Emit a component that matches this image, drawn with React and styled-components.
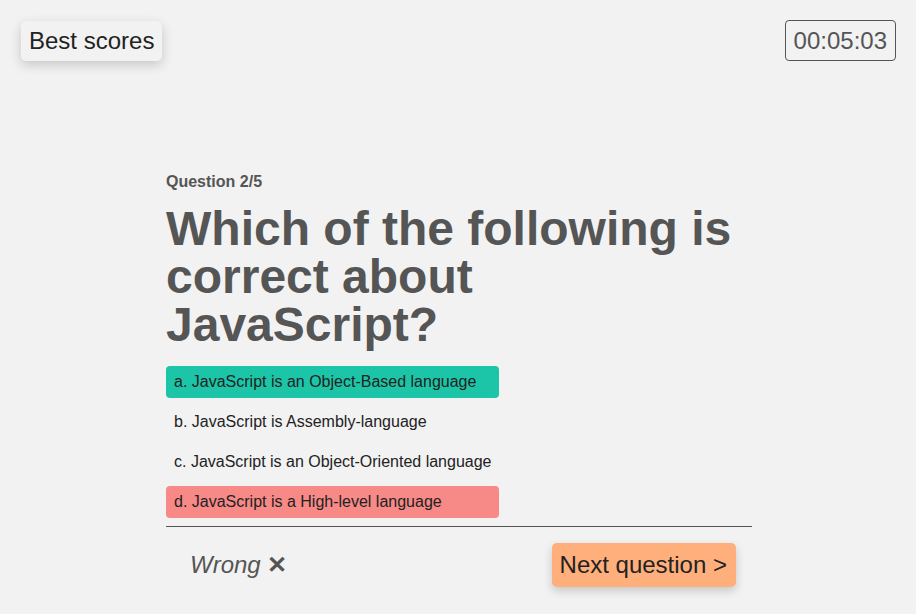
import React from "react";
import styled, { createGlobalStyle } from "styled-components";

const Global = createGlobalStyle`
  html, body { margin: 0; padding: 0; background: #f2f2f2; }
  body { font-family: "Liberation Sans", Arial, sans-serif; color: #555; }
`;

const Page = styled.div`
  min-height: 614px;
  display: flex;
  flex-direction: column;
  padding-left: 2px;
`;

const Header = styled.header`
  display: flex;
  justify-content: space-between;
  align-items: flex-start;
  padding: 20px 20px 0 19px;
`;

const ScoresButton = styled.button`
  margin-top: 1px;
  font-family: inherit;
  font-size: 24px;
  color: #222;
  background: #f2f2f2;
  border: none;
  border-radius: 5px;
  padding: 0 8px;
  height: 40px;
  box-shadow: 0 4px 12px rgba(0, 0, 0, 0.18);
`;

const Timer = styled.div`
  font-size: 24px;
  color: #555;
  border: 1px solid #555;
  border-radius: 4px;
  height: 39px;
  padding: 0 8px;
  display: flex;
  align-items: center;
`;

const Main = styled.main`
  width: 586px;
  margin: 112px auto 0;
  display: flex;
  flex-direction: column;
`;

const Counter = styled.div`
  font-size: 16px;
  font-weight: bold;
  color: #555;
`;

const Heading = styled.h1`
  margin: 14px 0 0;
  font-size: 48px;
  line-height: 48px;
  font-weight: bold;
  color: #555;
  width: 580px;
`;

const Options = styled.ul`
  list-style: none;
  margin: 17px 0 0;
  padding: 0;
  display: flex;
  flex-direction: column;
  gap: 8px;
`;

const tones = { correct: "#1dc5a8", wrong: "#f78987", none: "transparent" };

const Option = styled.li`
  width: 333px;
  height: 32px;
  box-sizing: border-box;
  padding: 0 8px;
  display: flex;
  align-items: center;
  white-space: nowrap;
  border-radius: 4px;
  font-size: 16px;
  color: #222;
  background: ${(p) => tones[p.$tone]};
`;

const Divider = styled.hr`
  margin: 8px 0 0;
  border: none;
  border-top: 1px solid #555;
  height: 0;
`;

const Footer = styled.div`
  display: flex;
  justify-content: space-between;
  align-items: flex-start;
  padding: 16px 16px 0 24px;
`;

const Verdict = styled.div`
  margin-top: 8px;
  font-size: 24px;
  font-style: italic;
  color: #555;
`;

const Cross = styled.span`
  font-style: normal;
  font-weight: bold;
`;

const NextButton = styled.button`
  font-family: inherit;
  font-size: 24px;
  color: #222;
  background: #ffaf7b;
  border: none;
  border-radius: 5px;
  height: 44px;
  padding: 0 9px 0 8px;
  box-shadow: 0 4px 10px rgba(0, 0, 0, 0.18);
`;

const options = [
  { text: "a. JavaScript is an Object-Based language", tone: "correct" },
  { text: "b. JavaScript is Assembly-language", tone: "none" },
  { text: "c. JavaScript is an Object-Oriented language", tone: "none" },
  { text: "d. JavaScript is a High-level language", tone: "wrong" },
];

export default function App() {
  return (
    <Page>
      <Global />
      <Header>
        <ScoresButton>Best scores</ScoresButton>
        <Timer>00:05:03</Timer>
      </Header>
      <Main>
        <Counter>Question 2/5</Counter>
        <Heading>Which of the following is correct about JavaScript?</Heading>
        <Options>
          {options.map((o) => (
            <Option key={o.text} $tone={o.tone}>{o.text}</Option>
          ))}
        </Options>
        <Divider />
        <Footer>
          <Verdict>Wrong <Cross>✕</Cross></Verdict>
          <NextButton>Next question &gt;</NextButton>
        </Footer>
      </Main>
    </Page>
  );
}
